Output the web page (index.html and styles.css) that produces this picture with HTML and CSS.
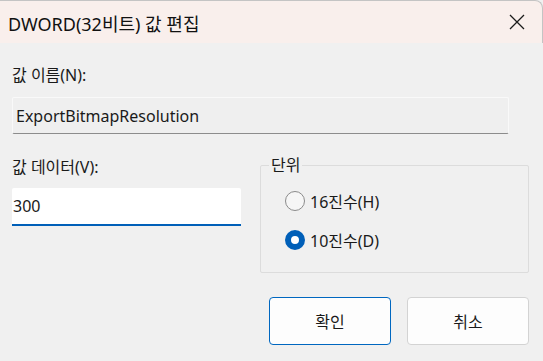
FILE: index.html
```html
<!DOCTYPE html>
<html lang="ko">

<head>
    <meta charset="UTF-8">
    <meta name="viewport" content="width=device-width, initial-scale=1.0">
    <title>DWORD(32비트) 값 편집</title>
    <link rel="stylesheet" href="styles.css">
</head>

<body>

    <div class="window">
        <div class="titlebar">
            <span class="title">DWORD(32비트) 값 편집</span>
            <button class="close-button" aria-label="닫기">
                <svg width="16" height="16" viewBox="0 0 16 16">
                    <path d="M1 1 L15 15 M15 1 L1 15" stroke="#1b1b1b" stroke-width="1.3" fill="none"/>
                </svg>
            </button>
        </div>

        <div class="content">
            <label class="field-label" for="value-name">값 이름(N):</label>
            <input class="name-field" id="value-name" type="text" value="ExportBitmapResolution" readonly>

            <div class="lower">
                <div class="data-column">
                    <label class="field-label" for="value-data">값 데이터(V):</label>
                    <input class="data-field" id="value-data" type="text" value="300">
                </div>

                <fieldset class="base-group">
                    <legend>단위</legend>
                    <label class="radio-row">
                        <input type="radio" name="base" value="hex">
                        <span>16진수(H)</span>
                    </label>
                    <label class="radio-row">
                        <input type="radio" name="base" value="dec" checked>
                        <span>10진수(D)</span>
                    </label>
                </fieldset>
            </div>

            <div class="buttons">
                <button class="dialog-button primary">확인</button>
                <button class="dialog-button">취소</button>
            </div>
        </div>
    </div>

</body>

</html>
```

FILE: styles.css
```css
html, body {
    margin: 0;
    padding: 0;
}

body {
    width: 543px;
    height: 361px;
    overflow: hidden;
    background: #f0f0f0;
    font-family: "Noto Sans", "Noto Sans CJK KR", sans-serif;
    font-size: 16px;
    color: #1a1a1a;
}

.window {
    display: flex;
    flex-direction: column;
    height: 361px;
}

.titlebar {
    height: 43px;
    box-sizing: border-box;
    display: flex;
    align-items: center;
    justify-content: space-between;
    padding-left: 8px;
    background: #f9efec;
    border-top: 1px solid #c4c4c4;
    border-right: 1px solid #c4c4c4;
    border-top-right-radius: 8px;
}

.title {
    font-size: 18px;
    color: #111;
    padding-top: 1px;
}

.close-button {
    border: none;
    background: none;
    width: 46px;
    height: 42px;
    padding: 0;
    display: flex;
    align-items: center;
    justify-content: center;
    margin-right: 2px;
}

.content {
    padding: 0 14px 0 12px;
}

.field-label {
    display: block;
    line-height: 24px;
}

.content > .field-label {
    margin-top: 20px;
}

.name-field {
    display: block;
    width: 497px;
    height: 37px;
    box-sizing: border-box;
    margin-top: 10px;
    padding: 0 3px;
    font: inherit;
    color: #1a1a1a;
    background: #efefef;
    border: 1px solid #f9f9f9;
    border-bottom: 1px solid #8c8c8c;
    border-radius: 2px;
    outline: none;
}

.lower {
    display: grid;
    grid-template-columns: 229px 269px;
    column-gap: 19px;
    margin-top: 21px;
}

.data-field {
    display: block;
    width: 229px;
    height: 38px;
    box-sizing: border-box;
    margin-top: 9px;
    padding: 0 1px;
    font: inherit;
    color: #1a1a1a;
    background: #fff;
    border: none;
    border-bottom: 2px solid #005fb8;
    border-radius: 2px 2px 0 0;
    outline: none;
}

.base-group {
    margin: -2px 0 0 0;
    padding: 4px 0 10px 24px;
    height: 120px;
    box-sizing: border-box;
    border: 1px solid #dcdcdc;
    border-radius: 2px;
}

.base-group legend {
    padding: 0 2px;
    margin-left: -16px;
    line-height: 24px;
}

.radio-row {
    display: flex;
    align-items: center;
    gap: 5px;
    height: 39px;
}

.radio-row input {
    appearance: none;
    margin: 0;
    width: 20px;
    height: 20px;
    box-sizing: border-box;
    border-radius: 50%;
    border: 1px solid #8b8b8b;
    background: #f6f6f6;
}

.radio-row input:checked {
    border: 6px solid #005fb8;
    background: #fff;
}

.buttons {
    display: flex;
    justify-content: flex-end;
    gap: 16px;
    margin-top: 24px;
}

.dialog-button {
    width: 122px;
    height: 48px;
    font: inherit;
    color: #1a1a1a;
    background: #fdfdfd;
    border: 1px solid #d3d3d3;
    border-radius: 4px;
}

.dialog-button.primary {
    border-color: #0067c0;
}
```
